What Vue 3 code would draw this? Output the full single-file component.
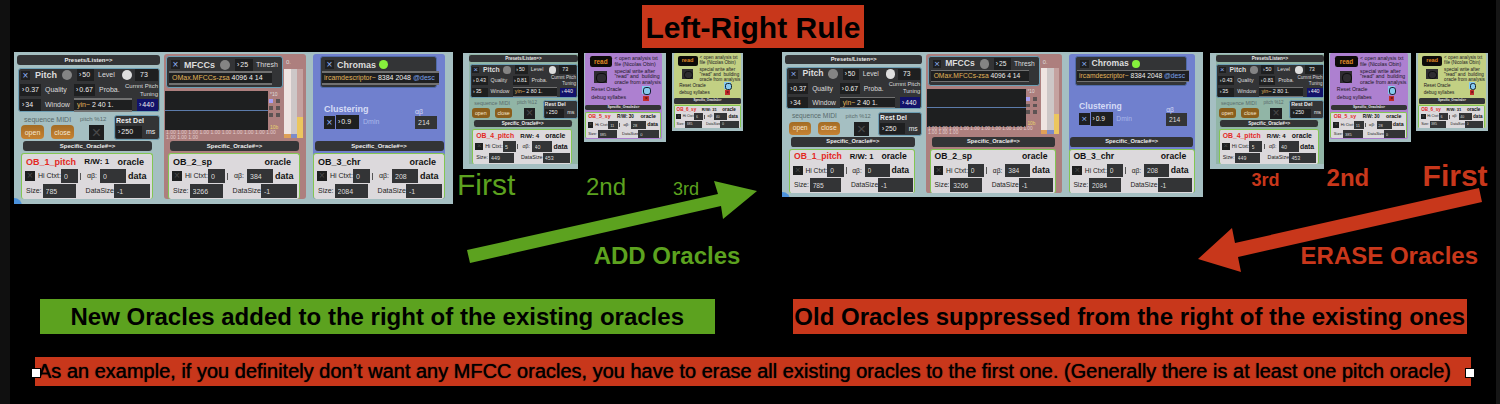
<script setup>
const trio = () => [
  { kind: 'pitch', name: 'OB_1_pitch', rw: 'R/W: 1', red: true, ctx: '0', ab: '0', size: '785', data: '-1', quality: '0.37', proba: '0.67', win: '34', args: '2 40 1.' },
  { kind: 'mfcc', name: 'OB_2_sp', rw: '', red: false, ctx: '0', ab: '384', size: '3266', data: '-1' },
  { kind: 'chroma', name: 'OB_3_chr', rw: '', red: false, ctx: '0', ab: '208', size: '2084', data: '-1' }
]
const added = () => [
  { scale: 'small', panels: [{ kind: 'pitch', name: 'OB_4_pitch', rw: 'R/W: 4', red: true, ctx: '5', ab: '40', size: '449', data: '453', quality: '0.43', proba: '0.81', win: '35', args: '2 80 1.' }] },
  { scale: 'smaller', panels: [{ kind: 'syllable', tone: 'violet', name: 'OB_5_sy', rw: 'R/W: 30', red: true, ctx: '11', ab: '28', size: '385', data: '0' }] },
  { scale: 'smallest', panels: [{ kind: 'syllable', tone: 'lime', name: 'OB_6_sy', rw: 'R/W: 31', red: true, ctx: '6', ab: '40', size: '385', data: '0' }] }
]
const sides = [
  {
    id: 'add',
    blocks: [
      { cls: 'main', strips: [{ scale: 'full', panels: trio() }] },
      { cls: 'extra', strips: added() }
    ],
    ranks: ['First', '2nd', '3rd'],
    verb: 'ADD Oracles',
    box: '0 0 292 86',
    arrow: '0,71 251,15 247,2 290,12 256,40 254,27 3,84'
  },
  {
    id: 'erase',
    blocks: [
      { cls: 'main', strips: [{ scale: 'reduced', panels: trio() }] },
      { cls: 'extra', strips: added() }
    ],
    ranks: ['3rd', '2nd', 'First'],
    verb: 'ERASE Oracles',
    box: '0 0 288 90',
    arrow: '1,74 35,43 38,58 282,3 285,17 41,72 44,87'
  }
]
</script>

<template>
  <main class="slide">
    <h1 class="title">Left-Right Rule</h1>

    <div class="board">
      <section v-for="side in sides" :key="side.id" class="side" :class="side.id">
        <div v-for="block in side.blocks" :key="block.cls" :class="block.cls">
          <div class="strips">
            <div v-for="strip in block.strips" :key="strip.scale" class="strip" :class="strip.scale">
              <article v-for="p in strip.panels" :key="p.name" class="panel" :class="[p.kind, p.tone]">
                <template v-if="p.kind === 'pitch'">
                  <div class="bar wide">Presets/Listen=&gt;</div>
                  <div class="box pitch-box">
                    <div class="line">
                      <input type="checkbox" class="tick" checked aria-label="Pitch on">
                      <b class="name">Pitch</b><i class="dot grey"></i>
                      <label class="num n16">›<input value="50" aria-label="Threshold"></label>
                      <span class="cap level">Level</span><i class="dot white"></i>
                      <label class="num n22 plain"><input value="73" aria-label="Level"></label>
                    </div>
                    <div class="line">
                      <label class="num n20">›<input :value="p.quality" aria-label="Quality"></label>
                      <span class="cap w30">Quality</span>
                      <label class="num n20">›<input :value="p.proba" aria-label="Probability"></label>
                      <span class="cap w22">Proba.</span>
                      <span class="tiny">Curnnt Pitch<br>Tuning</span>
                    </div>
                    <div class="line">
                      <label class="num n20">›<input :value="p.win" aria-label="Window"></label>
                      <span class="cap w30">Window</span>
                      <span class="object yin"><em>yin~</em> {{ p.args }}</span>
                      <label class="num n20 navy">›<input value="440" aria-label="Tuning"></label>
                    </div>
                  </div>
                  <div class="midi">
                    <div class="seq">
                      <span>sequence MIDI</span>
                      <div class="seq-buttons"><button type="button">open</button><button type="button">close</button></div>
                    </div>
                    <div class="mod"><span>pitch %12</span><input type="checkbox" class="tick large off" aria-label="pitch %12"></div>
                    <div class="box rest">
                      <b>Rest Del</b>
                      <div class="line"><label class="num n26">›<input value="250" aria-label="Rest delay"></label><span class="cap">ms</span></div>
                    </div>
                  </div>
                </template>

                <template v-else-if="p.kind === 'mfcc'">
                  <div class="mfcc-top">
                    <div class="mfcc-left">
                      <div class="box mfcc-box">
                        <div class="line">
                          <input type="checkbox" class="tick" checked aria-label="MFCCs on">
                          <b class="name">MFCCs</b><i class="dot grey"></i>
                          <label class="num n18">›<input value="25" aria-label="Threshold"></label>
                          <span class="cap">Thresh</span>
                        </div>
                        <div class="object"><em>OMax.MFCCs-zsa</em> 4096 4 14</div>
                      </div>
                      <div class="graph-row">
                        <div class="graph"></div>
                        <div class="leds">
                          <small>*10</small>
                          <div class="led-grid"><i v-for="n in 6" :key="n"></i></div>
                          <small class="ring">10b</small>
                        </div>
                      </div>
                      <p class="ones"><span v-for="n in 13" :key="n">1.00 </span></p>
                    </div>
                    <div class="meters">
                      <small>0.</small>
                      <div class="columns"><i></i><i></i><i></i></div>
                    </div>
                  </div>
                </template>

                <template v-else-if="p.kind === 'chroma'">
                  <div class="box chroma-box">
                    <div class="line">
                      <input type="checkbox" class="tick" checked aria-label="Chromas on">
                      <b class="name">Chromas</b><i class="dot green-dot"></i>
                    </div>
                    <div class="object"><em>ircamdescriptor~</em> 8384 2048 <s>@desc</s></div>
                  </div>
                  <div class="cluster">
                    <div>
                      <b>Clustering</b>
                      <div class="line">
                        <input type="checkbox" class="tick big" checked aria-label="Clustering on">
                        <label class="num n22 tall">›<input value="0.9" aria-label="Dmin"></label>
                        <span class="cap">Dmin</span>
                      </div>
                    </div>
                    <label class="ab">αβ<input value="214"></label>
                  </div>
                </template>

                <template v-else>
                  <div class="reader">
                    <div class="reader-side">
                      <button type="button" class="read">read</button>
                      <button type="button" class="bang" aria-label="Write"></button>
                    </div>
                    <p class="notes">&lt; open analysis txt<br>file (Nicolas Obin)<span>special write after<br>"read" and &nbsp;building<br>oracle from analysis</span></p>
                  </div>
                  <div class="option">Reset Oracle<button type="button" class="reset" aria-label="Reset Oracle"></button></div>
                  <label class="option">debug syllabes<input type="checkbox" class="tick debug" checked></label>
                </template>

                <div class="bar specific">Specific_Oracle#=&gt;</div>
                <div class="card">
                  <div class="row head">
                    <b :class="{ red: p.red }">{{ p.name }}</b><b class="rw">{{ p.rw }}</b><b>oracle</b>
                  </div>
                  <div class="row">
                    <input type="checkbox" class="tick off" aria-label="Use context">
                    <label class="ctx">Hi Ctxt:<input class="f17" :value="p.ctx"></label>
                    <span class="pipe"></span>
                    <label class="abl">αβ:<input class="f26" :value="p.ab"></label>
                    <b class="data">data</b>
                  </div>
                  <div class="row last">
                    <label>Size:<input class="f33" :value="p.size"></label>
                    <label class="dsize">DataSize<input class="f36" :value="p.data"></label>
                  </div>
                </div>
              </article>
            </div>
          </div>
          <template v-if="block.cls === 'extra'">
            <div class="ranks"><span v-for="r in side.ranks" :key="r" :class="'r' + r">{{ r }}</span></div>
            <p class="verb">{{ side.verb }}</p>
            <svg class="arrow" :viewBox="side.box" aria-hidden="true"><polygon :points="side.arrow" fill="currentColor" /></svg>
          </template>
        </div>
      </section>
    </div>

    <div class="rules">
      <p class="rule green">New Oracles added to the right of the existing oracles</p>
      <p class="rule">Old Oracles suppressed from the right of the existing ones</p>
    </div>
    <p class="example">As an example, if you definitely don’t want any MFCC oracles, you have to erase all existing oracles to the first one. (Generally there is at least one pitch oracle)</p>
  </main>
</template>

<style>
body { background: #000; }
</style>

<style scoped>
* { box-sizing: border-box; }
.slide {
  min-height: 100vh;
  padding: 5px 0 18px;
  border-left: 10px solid #101010;
  border-right: 4px solid #161616;
  background: #000;
  font-family: "Liberation Sans", Arial, Helvetica, sans-serif;
  overflow: hidden;
}
h1, p { margin: 0; }
.title {
  width: max-content;
  margin: 0 auto 4px;
  padding: 3px 4px 0;
  background: #c8371b;
  font-size: 30px;
  line-height: 40px;
}
.board { display: flex; justify-content: space-between; padding: 0 8px 0 4px; }
.side { display: flex; align-items: flex-start; gap: 10px; }
.erase { gap: 7px; }
.strips { display: flex; align-items: flex-start; gap: 6px; }
.erase .strips { gap: 5px; }
.extra { position: relative; padding-top: 1px; }
.add .extra { color: #5ca21f; }
.erase .extra { color: #c8371b; font-weight: bold; }

.ranks { display: grid; align-items: baseline; height: 36px; line-height: 32px; }
.add .ranks { grid-template-columns: 129px 87px auto; margin-left: -6px; }
.erase .ranks { grid-template-columns: 75px 96px auto; margin: -9px 0 0 42px; }
.rFirst { font-size: 30px; }
.r2nd { font-size: 24px; }
.r3rd { font-size: 18px; }
.verb { margin-top: 37px; padding-right: 3px; text-align: right; font-size: 24px; line-height: 28px; font-weight: bold; }
.erase .verb { margin-top: 46px; padding-right: 10px; }
.arrow { position: absolute; left: 4px; top: 127px; width: 292px; height: 86px; }
.erase .arrow { left: -13px; top: 133px; width: 288px; height: 90px; }

.rules { display: grid; grid-template-columns: 1fr 1fr; gap: 78px; margin: 29px 29px 0 30px; }
.rule { background: #c8371b; font-size: 24px; font-weight: bold; line-height: 36px; height: 35px; text-align: center; white-space: nowrap; }
.green { background: #5ca21f; }
.example {
  position: relative;
  margin: 23px 25px 0;
  padding-left: 3px;
  background: #c8371b;
  font-size: 20px;
  line-height: 29px;
  text-shadow: 0 0 1px #000;
  white-space: nowrap;
}
.example::before, .example::after {
  content: "";
  position: absolute;
  top: 11px;
  left: -4px;
  width: 8px;
  height: 8px;
  border: 1px solid #000;
  background: #fff;
}
.example::after { left: auto; right: -4px; }

/* patch windows */
.strip {
  display: flex;
  position: relative;
  height: 152px;
  overflow: hidden;
  background: #a5bfc2;
  color: #ddd;
  font-size: 7px;
  font-weight: normal;
  line-height: 10px;
  white-space: nowrap;
}
.full, .reduced { width: 439px; padding: 2px 8px 5px 3px; }
.full::after, .reduced::after {
  content: "";
  position: absolute;
  left: -8px;
  bottom: -10px;
  width: 16px;
  height: 16px;
  border-radius: 8px;
  background: #4b92dc;
}
.reduced { zoom: 0.957; }
.small { width: 151px; padding: 1px 0 5px 8px; zoom: 0.76; }
.smaller { width: 141px; height: 153px; padding: 0 6px 5px 2px; zoom: 0.58; }
.smallest { width: 141px; height: 153px; padding: 0 4px 5px 4px; zoom: 0.51; }
input { min-width: 0; border: 0; padding: 0; font: inherit; color: inherit; background: transparent; }
button { border: 0; padding: 0; font: inherit; color: inherit; }
i, em { font-style: normal; }
b { font-weight: bold; }

.panel { display: flex; flex-direction: column; flex: none; height: 145px; overflow: hidden; }
.pitch { width: 143px; margin-right: 4px; }
.small .pitch { background: #91b5a6; }
.mfcc { width: 142px; margin-right: 7px; padding-top: 2px; border-radius: 3px; background: #ad7f7e; }
.chroma { width: 132px; padding-top: 2px; border-radius: 3px; background: #7080ce; }
.syllable { width: 133px; height: 148px; border-radius: 3px; }
.violet { background: #ad80d0; }
.lime { background: #c2d083; }

.bar {
  flex: none;
  height: 10px;
  border-radius: 3px;
  background: #333436;
  color: #eee;
  font-size: 6px;
  font-weight: bold;
  text-align: center;
}
.wide { margin: 1px 0 3px; }
.specific { width: 129px; margin: auto auto 2px; }
.pitch .specific { margin-left: 6px; }
.mfcc .specific { margin-left: 6px; }
.syllable .specific { width: 131px; }

.box { border: 1px solid #6d9fb5; border-radius: 3px; background: #333436; }
.line { display: flex; align-items: center; }
.pitch-box { display: flex; flex-direction: column; gap: 2px; margin-left: 1px; padding: 0 1px; height: 44px; }
.pitch-box .line { height: 13px; }
.name { font-size: 9px; margin: 0 5px 0 4px; }
.dot { flex: none; width: 10px; height: 10px; border-radius: 5px; }
.grey { background: #848484; margin-right: 5px; }
.white { background: #dedede; margin: 0 3px; }
.green-dot { background: #86f03c; width: 9px; height: 9px; }
.num { display: flex; flex: none; align-items: center; gap: 1px; height: 12px; padding-left: 2px; background: #1e1f20; color: #eee; }
.num input { flex: 1; width: 10px; }
.n16 { width: 17px; }
.n18 { width: 18px; }
.n20 { width: 21px; }
.n22 { width: 23px; }
.n26 { width: 26px; }
.tall { height: 14px; }
.plain { padding-left: 5px; }
.navy { background: #12126a; margin-left: auto; }
.cap { margin-left: 4px; }
.level { width: 22px; }
.w30 { width: 29px; }
.w22 { width: 22px; }
.tiny { flex: 1; font-size: 6px; line-height: 8px; text-align: right; }
.tick {
  appearance: none;
  display: block;
  flex: none;
  width: 9px;
  height: 9px;
  margin: 0 1px;
  background: #1e1f20;
  color: #8fb2f2;
  font-size: 10px;
  line-height: 9px;
  text-align: center;
}
.tick::before { content: "×"; display: block; }
.tick.off { color: #4a4a4a; }
.tick.big { width: 11px; height: 13px; line-height: 13px; margin: 0 1px 0 0; }
.tick.large { width: 15px; height: 15px; font-size: 16px; line-height: 15px; }
.object { padding: 0 3px; border: solid #717171; border-width: 2px 0; background: #1e1f20; color: #eee; line-height: 10px; overflow: hidden; }
.object em { color: #e0b45a; }
.object s { color: #7ba0e8; text-decoration: none; }
.yin { width: 58px; }

.midi { display: flex; align-items: flex-start; height: 27px; margin: 3px 0 0 3px; color: #596b6c; }
.seq { width: 60px; padding-left: 1px; line-height: 9px; }
.seq span { padding-left: 3px; }
.seq-buttons { display: flex; gap: 7px; margin-top: 1px; }
.seq button { width: 23px; height: 14px; border-radius: 4px; background: linear-gradient(#a36c25, #c78232); color: #f5e6d2; }
.small .seq button { background: #8a5e1c; }
.mod { width: 30px; font-size: 6px; line-height: 9px; }
.mod .tick { margin: 1px 0 0 9px; }
.rest { width: 46px; height: 25px; margin: 0 0 0 auto; padding: 0 1px; color: #eee; }
.rest b { display: block; line-height: 10px; }

.mfcc-top { display: flex; }
.mfcc-left { width: 114px; margin-left: 1px; }
.mfcc-box, .chroma-box { width: 117px; height: 32px; padding: 1px 2px; }
.mfcc-box { margin-left: 1px; }
.mfcc-box .line, .chroma-box .line { height: 13px; padding-left: 1px; }
.mfcc-box .name { margin: 0 5px 0 3px; }
.mfcc-box .object { width: 103px; }
.mfcc-box .cap { margin-left: 3px; }
.graph-row { display: flex; margin-top: 3px; }
.graph { flex: none; width: 103px; height: 39px; background: linear-gradient(#1e1f20 19px, #5c7bab 19px, #5c7bab 20px, #1e1f20 20px); }
.leds { width: 14px; flex: none; font-size: 5px; line-height: 6px; }
.leds small { display: block; font-size: 5px; padding-left: 2px; }
.led-grid { display: grid; grid-template-columns: 4px 4px; gap: 3px; margin: 2px 1px 7px; }
.led-grid i { height: 4px; background: #5d5353; }
.led-grid i:first-child { background: #aaa0f4; }
.ring { color: #e8d36c; }
.ones { width: 116px; padding-left: 1px; color: #e3cdcd; font-size: 5px; line-height: 5px; white-space: normal; }
.meters { width: 19px; margin: 3px 0 0 5px; }
.meters small { display: block; height: 10px; padding-left: 2px; font-size: 6px; line-height: 7px; }
.columns { display: flex; height: 69px; }
.columns i { width: 7px; background: linear-gradient(#efe4e1 65px, #dfa057 65px); }
.columns i:nth-child(2) { background: linear-gradient(#cdc7c7 65px, #7d8bc9 65px); }
.columns i:nth-child(3) { width: 6px; background: linear-gradient(#c5a2a0 48px, #ecc65e 48px); }

.chroma-box { flex: none; margin-left: 7px; border-color: #506ba8; }
.chroma-box .name { margin: 0 3px 0 2px; }
.chroma-box .object { width: 117px; padding-left: 2px; margin-left: -1px; }
.cluster { display: flex; justify-content: space-between; padding: 15px 8px 0 11px; color: #d5dbf5; }
.cluster b { display: block; font-size: 9px; line-height: 12px; }
.cluster .cap { color: #a9b8ea; }
.ab { width: 22px; padding: 5px 0 0; line-height: 8px; }
.ab input { display: block; width: 22px; height: 13px; padding-left: 3px; background: #333436; color: #ddd; }

.reader { display: flex; flex: none; gap: 4px; padding: 6px 0 0 8px; }
.reader-side { width: 39px; }
.read { display: block; width: 39px; height: 19px; border-radius: 4px; background: #0c0a08; color: #e08a25; font-size: 11px; font-weight: bold; }
.bang { display: block; width: 22px; height: 21px; margin: 6px 0 0 8px; padding: 4px; background: #2e2c30; }
.bang::before { content: ""; display: block; width: 14px; height: 13px; border: 1px solid #0e0e0e; border-radius: 7px; }
.notes { color: #1b161e; font-size: 9px; line-height: 9px; }
.notes span { display: block; margin-top: 3px; line-height: 10px; }
.option { display: flex; flex: none; align-items: center; justify-content: space-between; height: 14px; padding: 0 21px 0 11px; color: #1b161e; font-size: 9px; }
.reset { flex: none; width: 13px; height: 13px; padding: 2px; background: #86c9ef; line-height: 9px; }
.reset::before { content: ""; display: block; width: 9px; height: 9px; border: 1px solid #123; border-radius: 5px; }
.tick.debug { margin: 0 2px; background: #c22e2e; color: #400; }

.card {
  flex: none;
  width: 132px;
  height: 46px;
  margin-left: 4px;
  padding: 0 2px 0 4px;
  border: 1px solid #83c652;
  border-bottom: 0;
  border-radius: 3px;
  background: #dcd9dc;
  color: #222;
}
.chroma .card, .syllable .card { margin-left: 0; }
.syllable .card { margin-bottom: 1px; }
.row { display: flex; align-items: center; height: 14px; }
.head { height: 15px; justify-content: space-between; padding-right: 6px; color: #111; font-size: 9px; }
.head .rw { font-size: 8px; }
.last { margin-top: 1px; }
.red { color: #e3281f; }
.row label { display: flex; align-items: center; }
.row label input { height: 14px; padding-left: 3px; background: #333436; color: #ddd; }
.row .tick { margin: 0 3px 0 -1px; width: 10px; height: 10px; }
.f17 { width: 17px; }
.f26 { width: 26px; }
.f33 { width: 33px; margin-left: 1px; }
.f36 { width: 36px; }
.pipe { width: 1px; height: 7px; margin: 0 6px 0 2px; background: #555; }
.abl { gap: 3px; }
.data { margin-left: 2px; font-size: 9px; color: #111; }
.dsize { margin-left: auto; }
</style>
